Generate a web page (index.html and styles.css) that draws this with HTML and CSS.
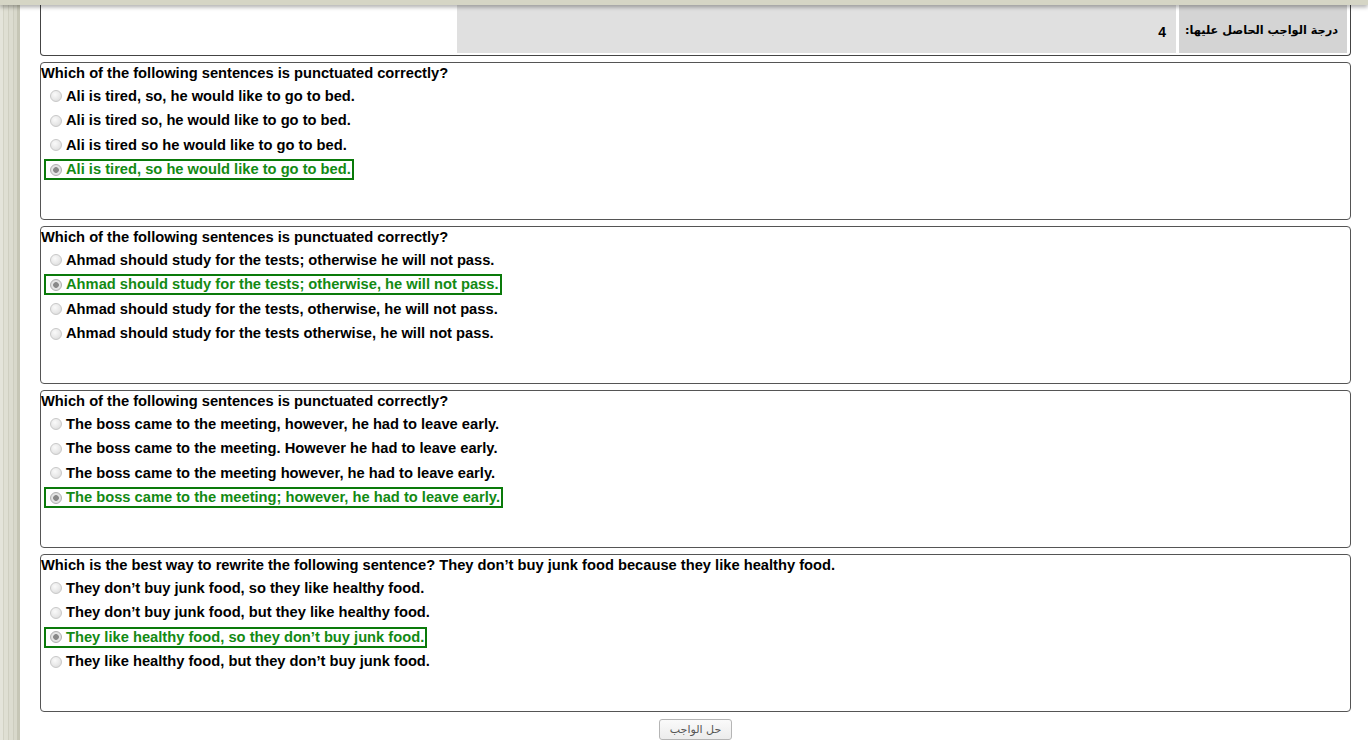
FILE: index.html
```html
<!DOCTYPE html>
<html lang="ar">
<head>
    <meta charset="UTF-8">
    <title>الواجب</title>
    <link rel="stylesheet" href="styles.css">
</head>
<body>
    <div class="topbar"></div>
    <div class="page">
        <div class="side-strip"></div>
        <div class="main" dir="ltr">
            <div class="score-card">
                <div class="score-blank"></div>
                <div class="score-value">4</div>
                <div class="score-label" dir="rtl">درجة الواجب الحاصل عليها:</div>
            </div>

            <div class="question">
                <div class="q-text">Which of the following sentences is punctuated correctly?</div>
                <div class="option"><span class="opt"><input type="radio" disabled> Ali is tired, so, he would like to go to bed.</span></div>
                <div class="option"><span class="opt"><input type="radio" disabled> Ali is tired so, he would like to go to bed.</span></div>
                <div class="option"><span class="opt"><input type="radio" disabled> Ali is tired so he would like to go to bed.</span></div>
                <div class="option"><span class="opt correct"><input type="radio" disabled checked> Ali is tired, so he would like to go to bed.</span></div>
            </div>

            <div class="question">
                <div class="q-text">Which of the following sentences is punctuated correctly?</div>
                <div class="option"><span class="opt"><input type="radio" disabled> Ahmad should study for the tests; otherwise he will not pass.</span></div>
                <div class="option"><span class="opt correct"><input type="radio" disabled checked> Ahmad should study for the tests; otherwise, he will not pass.</span></div>
                <div class="option"><span class="opt"><input type="radio" disabled> Ahmad should study for the tests, otherwise, he will not pass.</span></div>
                <div class="option"><span class="opt"><input type="radio" disabled> Ahmad should study for the tests otherwise, he will not pass.</span></div>
            </div>

            <div class="question">
                <div class="q-text">Which of the following sentences is punctuated correctly?</div>
                <div class="option"><span class="opt"><input type="radio" disabled> The boss came to the meeting, however, he had to leave early.</span></div>
                <div class="option"><span class="opt"><input type="radio" disabled> The boss came to the meeting. However he had to leave early.</span></div>
                <div class="option"><span class="opt"><input type="radio" disabled> The boss came to the meeting however, he had to leave early.</span></div>
                <div class="option"><span class="opt correct"><input type="radio" disabled checked> The boss came to the meeting; however, he had to leave early.</span></div>
            </div>

            <div class="question">
                <div class="q-text">Which is the best way to rewrite the following sentence? They don’t buy junk food because they like healthy food.</div>
                <div class="option"><span class="opt"><input type="radio" disabled> They don’t buy junk food, so they like healthy food.</span></div>
                <div class="option"><span class="opt"><input type="radio" disabled> They don’t buy junk food, but they like healthy food.</span></div>
                <div class="option"><span class="opt correct"><input type="radio" disabled checked> They like healthy food, so they don’t buy junk food.</span></div>
                <div class="option"><span class="opt"><input type="radio" disabled> They like healthy food, but they don’t buy junk food.</span></div>
            </div>

            <div class="actions">
                <button class="btn-solve">حل الواجب</button>
            </div>
        </div>
    </div>
</body>
</html>
```

FILE: styles.css
```css
html, body {
    margin: 0;
    height: 100%;
    overflow: hidden;
}

body {
    font-family: "Liberation Sans", Arial, sans-serif;
    background-color: #fff;
    color: #000;
}

.topbar {
    position: relative;
    z-index: 2;
    height: 5px;
    background-color: #d5d5c5;
    box-shadow: 0 2px 4px rgba(0, 0, 0, 0.35);
}

.page {
    display: flex;
    height: calc(100% - 5px);
}

.side-strip {
    flex: 0 0 20px;
    background: linear-gradient(to right,
        #e4e4da 0, #e4e4da 3px,
        #d2d2c4 3px, #d2d2c4 4px,
        #dfdfd3 4px, #dfdfd3 8px,
        #cfcfc1 8px, #cfcfc1 9px,
        #dcdcd0 9px, #dcdcd0 13px,
        #cdcdbf 13px, #cdcdbf 14px,
        #d8d8cb 14px, #d8d8cb 17px,
        #c6c6b6 17px, #c6c6b6 20px);
}

.main {
    flex: 1;
    padding: 0 17px 0 20px;
}

/* score row */
.score-card {
    display: flex;
    height: 48px;
    border: 1px solid #444;
    border-top: none;
    border-radius: 0 0 4px 4px;
    padding: 0 3px 2px 0;
}

.score-blank {
    flex: 0 0 416px;
}

.score-value {
    flex: 1;
    background-color: #e0e0e0;
    font-weight: bold;
    font-size: 14px;
    text-align: right;
    padding: 19px 10px 0 0;
    margin-right: 3px;
}

.score-label {
    flex: 0 0 168px;
    background-color: #d4d4d4;
    font-family: "DejaVu Sans", "Liberation Sans", sans-serif;
    font-weight: bold;
    font-size: 11.3px;
    white-space: nowrap;
    text-align: right;
    padding: 19px 9px 0 0;
    box-sizing: border-box;
}

/* questions */
.question {
    height: 158px;
    box-sizing: border-box;
    margin-top: 6px;
    border: 1px solid #555;
    border-radius: 4px;
}

.q-text {
    font-weight: bold;
    font-size: 14.7px;
    line-height: 20px;
    padding-bottom: 1px;
}

.option {
    height: 24.5px;
    display: flex;
    align-items: center;
    padding-left: 3px;
}

.opt {
    display: inline-flex;
    align-items: center;
    gap: 4px;
    font-weight: bold;
    font-size: 14.7px;
    line-height: 17px;
    border: 2px solid transparent;
    padding: 0 1px 0 4px;
}

.opt.correct {
    border-color: #0a7a0a;
    color: #138a13;
}

.opt input {
    -webkit-appearance: none;
    appearance: none;
    width: 12px;
    height: 12px;
    margin: 0;
    border-radius: 50%;
    border: 1px solid #c8c8c8;
    background: radial-gradient(circle at 40% 35%, #fafafa 0, #e8e8e8 55%, #d4d4d4 100%);
    box-sizing: border-box;
}

.opt input:checked {
    background: radial-gradient(circle, #888 0, #888 2.5px, #e6e6e6 3.2px, #d6d6d6 100%);
    border-color: #b0b0b0;
}

/* bottom button */
.actions {
    text-align: center;
    padding-top: 7px;
}

.btn-solve {
    font-family: "DejaVu Sans", "Liberation Sans", sans-serif;
    font-size: 11px;
    color: #555;
    padding: 3px 10px;
    border: 1px solid #b5b5b5;
    border-radius: 3px;
    background: linear-gradient(#fafafa, #ececec);
}
```
